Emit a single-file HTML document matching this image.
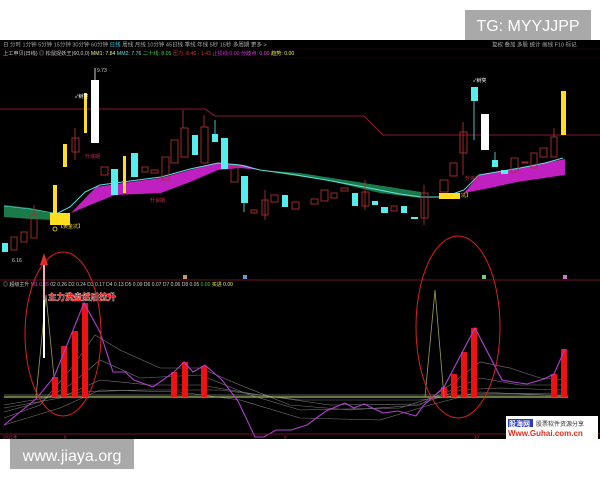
<!DOCTYPE html>
<html><head><meta charset="utf-8"><style>
html,body{margin:0;padding:0;background:#fff;width:600px;height:480px;overflow:hidden}
svg{display:block}
text{font-family:"Liberation Sans","Noto Sans CJK SC",sans-serif}
</style></head><body>
<svg width="600" height="480" viewBox="0 0 600 480" xmlns="http://www.w3.org/2000/svg">
<rect x="0" y="0" width="600" height="480" fill="#fff"/>
<rect x="0" y="40" width="600" height="399" fill="#000"/>
<!-- TG box -->
<rect x="465" y="10" width="126" height="30" fill="#a9a9a9"/>
<text x="528" y="31" font-size="16" fill="#fff" text-anchor="middle">TG: MYYJJPP</text>
<!-- toolbar -->
<text x="3" y="46.5" font-size="5.5" fill="#aaa">日 分时 1分钟 5分钟 15分钟 30分钟 60分钟 <tspan fill="#4ce">日线</tspan> 周线 月线 10分钟 45日线 季线 年线 5秒 15秒 多周期 更多 &gt;</text>
<text x="492" y="46.5" font-size="5.5" fill="#aaa">复权 叠加 多股 统计 画线 F10 标记</text>
<line x1="0" y1="49" x2="600" y2="49" stroke="#301010" stroke-width="0.6"/>
<text x="3" y="55" font-size="5.2" fill="#ccc">上工申贝(日线) ◎ 松鼠捉妖王(60,0,0) <tspan fill="#ee8">MM1: 7.84</tspan> <tspan fill="#6dd">MM2: 7.76</tspan> <tspan fill="#4c4">二十线: 8.05</tspan> <tspan fill="#d33">压力: 8.46 - 1.43</tspan> <tspan fill="#c3c">止损线:0.00</tspan> <tspan fill="#e4e">分歧点: 0.00</tspan> <tspan fill="#ee4">趋势: 0.00</tspan></text>
<line x1="0" y1="58" x2="600" y2="58" stroke="#200808" stroke-width="0.5"/>
<!-- resistance red line -->
<polyline points="0,109 205,109 215,116 364,116 383,135 600,135" fill="none" stroke="#b02040" stroke-width="0.8"/>
<!-- bands -->
<polygon points="4,205 30,208 54,213 54,220 30,219 4,217" fill="#1a7a4a"/>
<polygon points="71,213 96,187 130,182 161,178 190,170 218,163 245,165 260,170 240,168 218,170 190,182 161,193 115,195 90,205" fill="#c020c0"/>
<polygon points="260,170 300,173 364,183 421,192 421,198 380,193 326,180 290,175" fill="#1a7a4a"/>
<polygon points="464,193 479,175 520,168 545,163 565,159 565,175 517,182 490,188" fill="#c020c0"/>
<polyline points="50,217 70,207 85,192 100,185 130,181 161,177 190,169 218,163 240,165 260,170 290,174 326,180 364,187 400,194 421,197 444,197 464,190 479,175 520,168 545,163 563,158" fill="none" stroke="#60e0e0" stroke-width="1"/>
<polyline points="4,206 30,209 54,213" fill="none" stroke="#60e0e0" stroke-width="0.6"/>
<!-- red hollow candles -->
<g fill="none" stroke="#a83030" stroke-width="0.9">
<rect x="11" y="237" width="6" height="13"/><rect x="21" y="232" width="6" height="10"/><rect x="31" y="215" width="6" height="23"/>
<rect x="72" y="138" width="7" height="14"/><rect x="101" y="167" width="7" height="8"/><rect x="142" y="167" width="6" height="5"/>
<rect x="151" y="170" width="7" height="3"/><rect x="162" y="157" width="7" height="23"/><rect x="171" y="140" width="7" height="23"/>
<rect x="181" y="128" width="7" height="29"/><rect x="201" y="127" width="7" height="36"/><rect x="231" y="167" width="7" height="15"/>
<rect x="251" y="210" width="6" height="3"/><rect x="262" y="200" width="6" height="15"/><rect x="271" y="195" width="7" height="7"/>
<rect x="292" y="202" width="7" height="7"/><rect x="311" y="199" width="7" height="5"/><rect x="321" y="190" width="7" height="11"/>
<rect x="331" y="193" width="6" height="5"/><rect x="341" y="188" width="7" height="3"/><rect x="362" y="192" width="7" height="14"/>
<rect x="391" y="206" width="6" height="5"/><rect x="421" y="193" width="7" height="25"/><rect x="440" y="180" width="8" height="12"/>
<rect x="450" y="163" width="7" height="13"/><rect x="460" y="132" width="7" height="21"/><rect x="511" y="158" width="7" height="14"/>
<rect x="522" y="162" width="6" height="1"/><rect x="531" y="153" width="6" height="15"/><rect x="540" y="148" width="7" height="9"/><rect x="551" y="137" width="6" height="20"/>
<line x1="183" y1="110" x2="183" y2="128"/><line x1="204" y1="115" x2="204" y2="127"/><line x1="75" y1="128" x2="75" y2="160"/>
<line x1="34" y1="205" x2="34" y2="215"/><line x1="463" y1="122" x2="463" y2="175"/><line x1="554" y1="128" x2="554" y2="137"/>
<line x1="424" y1="185" x2="424" y2="225"/><line x1="265" y1="190" x2="265" y2="220"/><line x1="365" y1="180" x2="365" y2="210"/>
</g>
<!-- cyan candles -->
<g fill="#55eeee">
<rect x="2" y="243" width="6" height="9"/>
<rect x="111" y="169" width="7" height="26"/><rect x="131" y="153" width="7" height="24"/><rect x="192" y="135" width="6" height="20"/>
<rect x="212" y="134" width="6" height="8"/><rect x="221" y="138" width="7" height="31"/><rect x="241" y="176" width="7" height="27"/>
<rect x="282" y="195" width="6" height="12"/><rect x="352" y="193" width="6" height="13"/><rect x="372" y="201" width="6" height="4"/>
<rect x="381" y="207" width="7" height="6"/><rect x="401" y="206" width="6" height="7"/><rect x="411" y="217" width="7" height="2"/>
<rect x="471" y="87" width="7" height="14"/><rect x="492" y="160" width="6" height="7"/><rect x="501" y="170" width="7" height="4"/>
</g>
<g stroke="#55eeee" stroke-width="0.8"><line x1="474" y1="101" x2="474" y2="140"/><line x1="244" y1="203" x2="244" y2="212"/><line x1="215" y1="120" x2="215" y2="134"/><line x1="495" y1="152" x2="495" y2="160"/></g>
<!-- white candles -->
<rect x="91" y="80" width="8" height="63" fill="#fff"/><line x1="95" y1="68" x2="95" y2="80" stroke="#fff" stroke-width="0.8"/>
<text x="97" y="72" font-size="5" fill="#ccc">9.73</text>
<rect x="481" y="114" width="8" height="36" fill="#fff"/>
<!-- yellow candles -->
<g fill="#ffdd22">
<rect x="84" y="93" width="3" height="40"/><rect x="63" y="144" width="4" height="23"/><rect x="53" y="185" width="4" height="38"/>
<rect x="123" y="156" width="3" height="37"/><rect x="561" y="91" width="5" height="44"/>
<rect x="50" y="213" width="20" height="12"/><rect x="439" y="193" width="21" height="6"/>
</g>
<text x="75" y="98" font-size="5" fill="#fff">✓树突</text>
<text x="473" y="82" font-size="5" fill="#fff">✓树突</text>
<text x="58" y="228" font-size="5" fill="#ffdd22">【黄金坑】</text>
<circle cx="55" cy="229" r="2" fill="none" stroke="#ffdd22" stroke-width="0.8"/>
<text x="461" y="197" font-size="5" fill="#ffdd22">坑】</text>
<text x="85" y="158" font-size="5" fill="#c03050">升浪期</text>
<text x="150" y="202" font-size="5" fill="#c03050">升浪期</text>
<text x="465" y="180" font-size="5" fill="#c03050">升浪期</text>
<text x="12" y="262" font-size="5" fill="#ccc">6.16</text>
<!-- panel divider -->
<line x1="0" y1="280" x2="600" y2="280" stroke="#902030" stroke-width="0.8"/>
<rect x="183" y="275" width="4" height="4" fill="#c96"/><rect x="243" y="275" width="4" height="4" fill="#69c"/>
<rect x="482" y="275" width="4" height="4" fill="#7c7"/><rect x="563" y="275" width="4" height="4" fill="#c7c"/>
<text x="3" y="286" font-size="5" fill="#ccc">◎ 超级主升 <tspan fill="#c4c">M1 0.35</tspan> 02 0.26 D2 0.24 D3 0.17 D4 0.13 D5 0.09 D6 0.07 D7 0.06 D8 0.05 <tspan fill="#4c4">0.00</tspan> <tspan fill="#ee4">买进 0.00</tspan></text>
<!-- gray MA lines -->
<g fill="none" stroke="#999" stroke-width="0.6" opacity="0.8">
<polyline points="4,418 40,405 70,370 95,335 120,350 160,368 200,368 240,385 290,405 350,410 420,405 450,385 480,362 510,368 540,378 565,380"/>
<polyline points="4,412 40,402 70,385 100,360 140,378 200,375 250,395 300,410 400,408 440,395 480,378 520,385 565,385"/>
<polyline points="4,408 60,398 100,380 150,385 200,385 260,395 330,405 420,404 460,390 500,388 565,390"/>
<polyline points="4,405 80,392 140,390 220,390 300,400 420,400 470,394 565,393"/>
<polyline points="4,425 60,408 100,390 180,392 240,400 300,418 380,420 430,405 480,392 565,396"/>
</g>
<line x1="4" y1="397" x2="568" y2="397" stroke="#9cc060" stroke-width="1.2"/>
<line x1="4" y1="395" x2="568" y2="395" stroke="#ddd" stroke-width="0.4"/>
<!-- red bars -->
<g fill="#ee1111">
<rect x="52" y="377" width="6" height="20"/><rect x="61" y="346" width="6" height="51"/><rect x="72" y="331" width="6" height="66"/><rect x="82" y="303" width="6" height="94"/>
<rect x="171" y="372" width="6" height="25"/><rect x="182" y="362" width="6" height="35"/><rect x="201" y="366" width="6" height="31"/>
<rect x="441" y="387" width="6" height="10"/><rect x="451" y="374" width="6" height="23"/><rect x="461" y="352" width="6" height="45"/><rect x="471" y="328" width="6" height="69"/>
<rect x="551" y="374" width="6" height="23"/><rect x="561" y="349" width="6" height="48"/>
</g>
<!-- spikes -->
<polyline points="36,397 46,295 54,377" fill="none" stroke="#a0a050" stroke-width="0.8"/>
<polyline points="425,397 435,290 444,397" fill="none" stroke="#a0a050" stroke-width="0.8"/>
<!-- purple line -->
<polyline points="4,425 36,399 54,377 84,303 100,332 113,372 125,372 134,380 153,387 174,372 184,362 193,372 205,365 222,380 238,401 255,437 264,437 276,430 291,430 307,425 326,411 345,403 354,408 364,404 383,413 398,411 416,416 423,406 444,387 475,328 502,380 513,382 527,384 544,379 554,374 565,349" fill="none" stroke="#b040d0" stroke-width="1.1"/>
<!-- arrow -->
<line x1="44" y1="358" x2="44" y2="262" stroke="#fff" stroke-width="2"/>
<polygon points="44,253 40,265 48,265" fill="#e03030"/>
<line x1="44" y1="265" x2="44" y2="300" stroke="#e03030" stroke-width="0.8"/>
<text x="48" y="300" font-size="8.5" font-weight="bold" fill="#ee2222" stroke="#fff" stroke-width="0.5" paint-order="stroke">主力洗盘然后拉升</text>
<!-- ellipses -->
<ellipse cx="63" cy="334" rx="38" ry="82" fill="none" stroke="#dd2020" stroke-width="1"/>
<ellipse cx="458" cy="327" rx="42" ry="91" fill="none" stroke="#dd2020" stroke-width="1"/>
<!-- bottom axis -->
<line x1="0" y1="434" x2="600" y2="434" stroke="#902030" stroke-width="0.8"/>
<text x="3" y="438.5" font-size="4.5" fill="#a44">2021年</text>
<text x="64" y="438.5" font-size="4.5" fill="#a44">8</text>
<text x="284" y="438.5" font-size="4.5" fill="#a44">9</text>
<text x="474" y="438.5" font-size="4.5" fill="#a44">10</text>
<!-- Guhai logo -->
<rect x="506" y="416" width="92" height="23" fill="#fff"/>
<rect x="508" y="419" width="25" height="8" fill="#2a3ab8"/>
<text x="509" y="426" font-size="7" font-weight="bold" fill="#fff">股海网</text>
<text x="536" y="426" font-size="6" fill="#333" font-family="'Noto Serif CJK SC',serif">股票软件资源分享</text>
<text x="508" y="436" font-size="8" font-weight="bold" fill="#e03020">Www.Guhai.com.cn</text>
<!-- jiaya box -->
<rect x="10" y="439" width="124" height="30" fill="#a9a9a9"/>
<text x="72" y="461" font-size="16" fill="#fff" text-anchor="middle">www.jiaya.org</text>
</svg>
</body></html>
